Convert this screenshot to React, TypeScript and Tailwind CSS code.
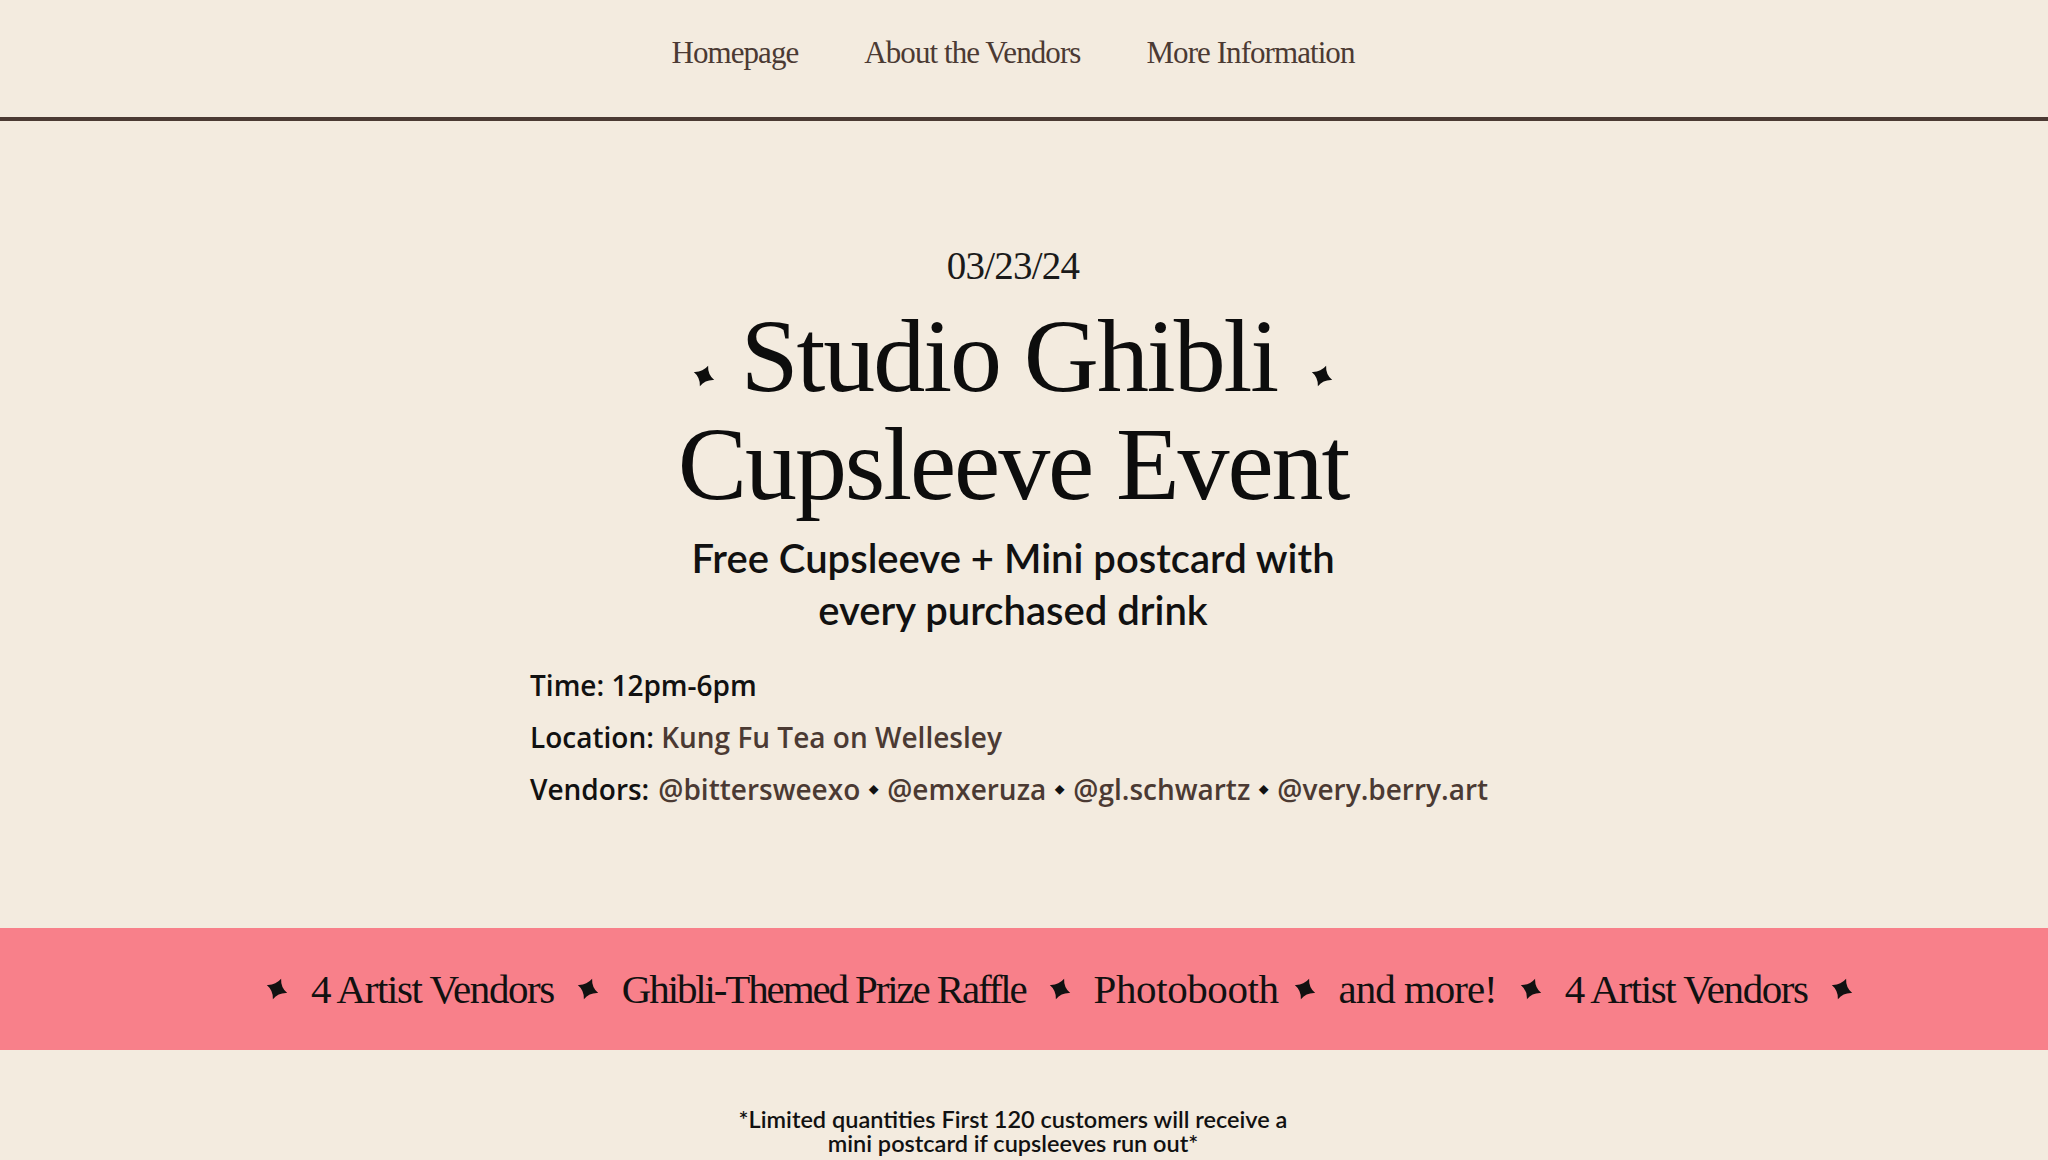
import React from 'react';

const serif = { fontFamily: '"Liberation Serif", "DejaVu Serif", serif' };
const hand = { fontFamily: 'Lato, "Noto Sans", sans-serif' };
const info = { fontFamily: '"Open Sans", "Noto Sans", sans-serif' };

const Sparkle: React.FC<{ className?: string }> = ({ className }) => (
  <svg viewBox="0 0 24 24" className={className} aria-hidden="true">
    <path
      d="M12 0 Q15 9 24 12 Q15 15 12 24 Q9 15 0 12 Q9 9 12 0 Z"
      fill="currentColor"
      transform="rotate(22 12 12)"
    />
  </svg>
);

const navItems = ['Homepage', 'About the Vendors', 'More Information'];
const highlights = [
  { label: '4 Artist Vendors', track: 'tracking-[-0.035em]', star: 'w-[22px] h-[22px] shrink-0' },
  { label: 'Ghibli-Themed Prize Raffle', track: 'tracking-[-0.052em]', star: 'w-[22px] h-[22px] shrink-0' },
  { label: 'Photobooth', track: 'tracking-[-0.01em]', star: 'w-[22px] h-[22px] shrink-0 -ml-[8px]' },
  { label: 'and more!', track: 'tracking-[-0.025em]', star: 'w-[22px] h-[22px] shrink-0' },
  { label: '4 Artist Vendors', track: 'tracking-[-0.035em]', star: 'w-[22px] h-[22px] shrink-0' },
];
const vendors = ['@bittersweexo', '@emxeruza', '@gl.schwartz', '@very.berry.art'];

export default function App() {
  return (
    <div className="min-h-screen w-full bg-[#f3ebdf] text-[#111]">
      <header className="h-[121px] border-b-4 border-[#4b3a33] flex justify-center gap-[66px] pt-[33px] pr-[22px]">
        {navItems.map((item) => (
          <a key={item} href="#" style={serif} className="text-[31px] leading-[40px] tracking-[-0.03em] text-[#4b3a33]">
            {item}
          </a>
        ))}
      </header>

      <main className="flex flex-col items-center pr-[22px]">
        <p style={serif} className="mt-[125px] text-[39px] leading-[39px] tracking-[-0.02em] text-[#1a1a1a]">
          03/23/24
        </p>

        <h1 style={serif} className="mt-[17px] text-[104px] leading-[108px] tracking-[-0.02em] text-center text-[#0d0d0d]">
          <Sparkle className="inline-block align-baseline w-[22px] h-[22px] mr-[26px] mb-[4px]" />
          Studio Ghibli
          <Sparkle className="inline-block align-baseline w-[22px] h-[22px] ml-[34px] mb-[4px]" />
          <br />
          Cupsleeve Event
        </h1>

        <p style={hand} className="mt-[14px] w-[740px] text-center text-[40px] leading-[52px] font-semibold text-[#111]">
          Free Cupsleeve + Mini postcard with
          <br />
          every purchased drink
        </p>

        <div style={info} className="mt-[23px] w-[966px] text-[28px] leading-[52px] font-semibold">
          <p>Time: 12pm-6pm</p>
          <p>
            Location: <span className="text-[#4b3a33]">Kung Fu Tea on Wellesley</span>
          </p>
          <p className="flex items-center gap-[9px]">
            <span>Vendors:</span>
            {vendors.map((v, i) => (
              <React.Fragment key={v}>
                {i > 0 && <span className="text-[12px] text-[#111]">◆</span>}
                <span className="text-[#4b3a33]">{v}</span>
              </React.Fragment>
            ))}
          </p>
        </div>
      </main>

      <section className="mt-[113px] h-[122px] bg-[#f8808a] flex items-center pl-[266px] gap-[23px] overflow-hidden">
        <Sparkle className="w-[22px] h-[22px] shrink-0" />
        {highlights.map((h, i) => (
          <React.Fragment key={i}>
            <span style={serif} className={`text-[41px] leading-[40px] whitespace-nowrap ${h.track}`}>
              {h.label}
            </span>
            <Sparkle className={h.star} />
          </React.Fragment>
        ))}
      </section>

      <p style={hand} className="mt-[57px] pr-[22px] text-center text-[23.5px] leading-[24px] font-semibold">
        *Limited quantities First 120 customers will receive a
        <br />
        mini postcard if cupsleeves run out*
      </p>
    </div>
  );
}
